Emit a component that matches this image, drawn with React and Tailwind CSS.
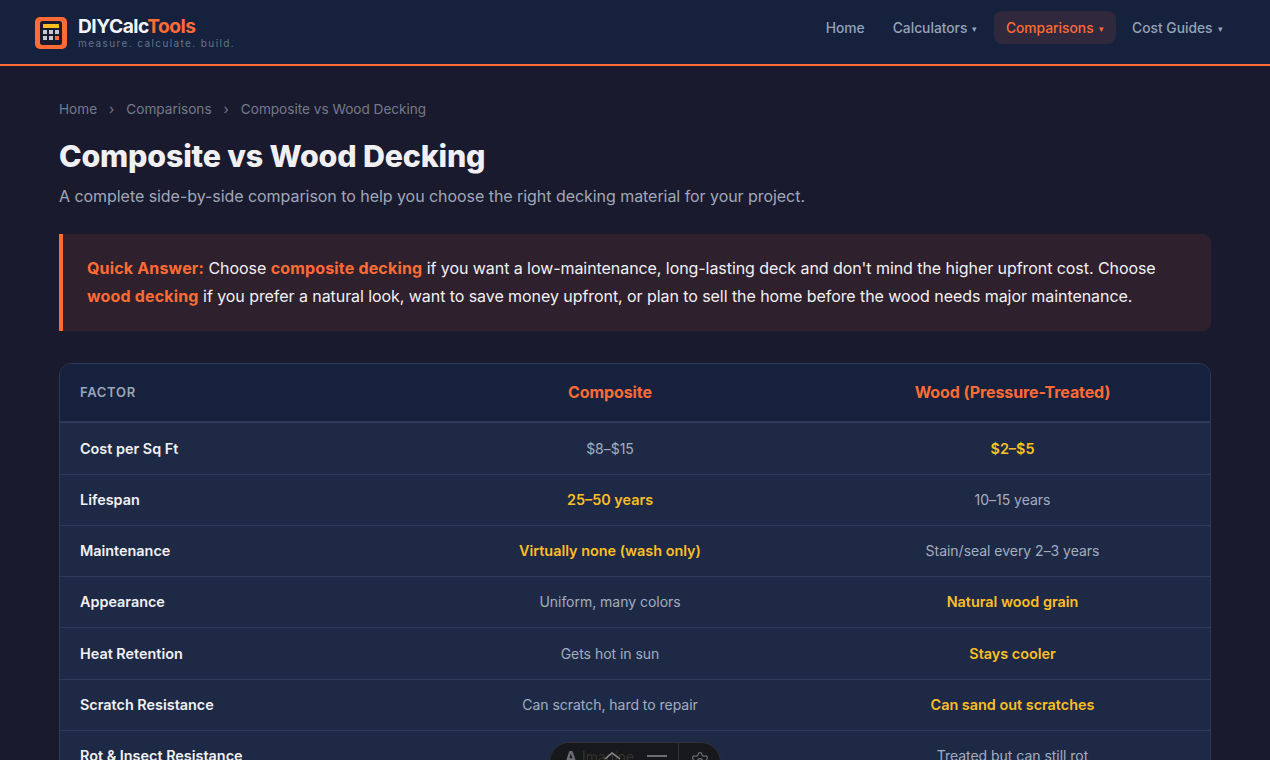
import { Settings } from "lucide-react"

const rows = [
  { factor: "Cost per Sq Ft", a: "$8–$15", b: "$2–$5", win: "b" },
  { factor: "Lifespan", a: "25–50 years", b: "10–15 years", win: "a" },
  { factor: "Maintenance", a: "Virtually none (wash only)", b: "Stain/seal every 2–3 years", win: "a" },
  { factor: "Appearance", a: "Uniform, many colors", b: "Natural wood grain", win: "b" },
  { factor: "Heat Retention", a: "Gets hot in sun", b: "Stays cooler", win: "b" },
  { factor: "Scratch Resistance", a: "Can scratch, hard to repair", b: "Can sand out scratches", win: "b" },
  { factor: "Rot & Insect Resistance", a: "", b: "Treated but can still rot", win: "a" },
]

function Logo() {
  return (
    <div className="flex h-8 w-8 items-center justify-center rounded-[5px] bg-[#ff6b35]">
      <svg width="22" height="24" viewBox="0 0 22 24">
        <rect x="0" y="0" width="22" height="24" rx="2.5" fill="#1a1a2e" />
        <rect x="3" y="3" width="16" height="4" rx="0.5" fill="#fbbf24" />
        <rect x="3" y="9" width="4" height="4" fill="#c4c8d0" />
        <rect x="9" y="9" width="4" height="4" fill="#c4c8d0" />
        <rect x="15" y="9" width="4" height="4" fill="#c4c8d0" />
        <rect x="3" y="15" width="4" height="4" fill="#c4c8d0" />
        <rect x="9" y="15" width="4" height="4" fill="#c4c8d0" />
        <rect x="15" y="15" width="4" height="4" fill="#ff6b35" />
      </svg>
    </div>
  )
}

function NavLink({ label, caret, active }) {
  return (
    <a
      className={`flex h-[33px] items-center rounded-lg px-3 pt-px text-[13.8px] font-medium ${
        active ? "bg-[#30283c] text-[#ff6b35]" : "text-[#94a3b8]"
      }`}
    >
      {label}
      {caret && <span className="mr-[0.5px] ml-[5px] text-[9px] leading-none">▾</span>}
    </a>
  )
}

export default function App() {
  return (
    <div className="h-[760px] overflow-hidden bg-[#1a1a2e] font-['Inter',sans-serif] text-white">
      <header className="flex h-[66px] items-start justify-between border-b-2 border-[#ff6b35] bg-[#16213e] px-[35px] pt-[11px]">
        <div className="mt-[5px] flex items-center gap-[11px]">
          <Logo />
          <div>
            <div className="text-[19.2px] leading-[20px] font-bold tracking-[-0.5px] text-[#f1f5f9]">
              DIYCalc<span className="text-[#ff6b35]">Tools</span>
            </div>
            <div className="mt-[1px] text-[10px] leading-[12px] tracking-[1.4px] text-[#64748b]">measure. calculate. build.</div>
          </div>
        </div>
        <nav className="flex items-center gap-1">
          <NavLink label="Home" />
          <NavLink label="Calculators" caret />
          <NavLink label="Comparisons" caret active />
          <NavLink label="Cost Guides" caret />
        </nav>
      </header>

      <main className="px-[59px] pt-[34px]">
        <div className="flex items-center text-[13.6px] leading-[18px] text-[#737a8c]">
          <span>Home</span>
          <span className="mx-3">›</span>
          <span>Comparisons</span>
          <span className="mx-3">›</span>
          <span>Composite vs Wood Decking</span>
        </div>
        <h1 className="mt-[18px] text-[30.4px] leading-[40px] font-extrabold tracking-[-0.18px] text-[#f0f0f2]">Composite vs Wood Decking</h1>
        <p className="mt-2 text-base leading-[24px] tracking-[-0.05px] text-[#a0a8b8]">
          A complete side-by-side comparison to help you choose the right decking material for your project.
        </p>

        <div className="mt-[26px] rounded-r-lg border-l-4 border-[#ff6b35] bg-[#2f202d] px-6 pt-5 pb-[21px] text-base leading-[28px] tracking-[-0.065px] text-[#f1f1f4]">
          <strong className="font-bold tracking-[0.17px] text-[#ff6b35]">Quick Answer:</strong> Choose{" "}
          <strong className="font-bold tracking-[0.17px] text-[#ff6b35]">composite decking</strong> if you want a low-maintenance, long-lasting deck and don't mind the higher upfront cost. Choose{" "}
          <strong className="font-bold tracking-[0.17px] text-[#ff6b35]">wood decking</strong> if you prefer a natural look, want to save money upfront, or plan to sell the home before the wood needs major maintenance.
        </div>

        <div className="mt-8 overflow-hidden rounded-xl border border-[#2d3a5a] bg-[#1e2a45]">
          <div className="grid h-[59.4px] grid-cols-[345px_410px_395px] items-center border-b-2 border-[#2d3a5a] bg-[#16213e]">
            <div className="pl-5 text-[13px] font-semibold tracking-[0.7px] text-[#9aa5b8]">FACTOR</div>
            <div className="pb-px text-center text-base font-bold tracking-[-0.1px] text-[#ff6b35]">Composite</div>
            <div className="pb-px text-center text-base font-bold tracking-[-0.1px] text-[#ff6b35]">Wood (Pressure-Treated)</div>
          </div>
          {rows.map((row) => (
            <div key={row.factor} className="grid h-[51.25px] grid-cols-[345px_410px_395px] items-center border-b border-[#2d3a5a]">
              <div className="pl-5 text-[14.4px] font-semibold text-[#f1f1f4]">{row.factor}</div>
              <div className={`text-center ${row.win === "a" ? "text-[14.4px] font-semibold text-[#fbbf24]" : "text-sm tracking-[-0.03px] text-[#a3adc0]"}`}>{row.a}</div>
              <div className={`text-center ${row.win === "b" ? "text-[14.4px] font-semibold text-[#fbbf24]" : "text-sm tracking-[-0.03px] text-[#a3adc0]"}`}>{row.b}</div>
            </div>
          ))}
        </div>
      </main>

      {/* floating toolbar that sits over the table */}
      <div className="fixed top-[742px] left-[549px] flex h-10 w-[172px] items-start rounded-[20px] border border-[#303236] bg-[#17181c]">
        <div className="relative flex h-full w-[129px] items-start border-r border-[#303236] pt-1 pl-[15px]">
          <span className="text-base leading-[20px] font-bold text-[#6b6e74]">A</span>
          <span className="ml-[5px] text-sm leading-[20px] text-[#38352a]">Imagine</span>
          <span className="absolute top-3 left-[97px] h-[2px] w-5 bg-[#6b6e74]" />
          <svg className="absolute top-[9px] left-[54px]" width="18" height="9" viewBox="0 0 18 9" fill="none" stroke="#8a8d92" strokeWidth="1.5">
            <path d="M1 7 L8 1 L16 7" />
          </svg>
        </div>
        <div className="flex flex-1 justify-center pt-2 text-[#6b6e74]">
          <Settings size={20} strokeWidth={1.5} />
        </div>
      </div>
    </div>
  )
}
